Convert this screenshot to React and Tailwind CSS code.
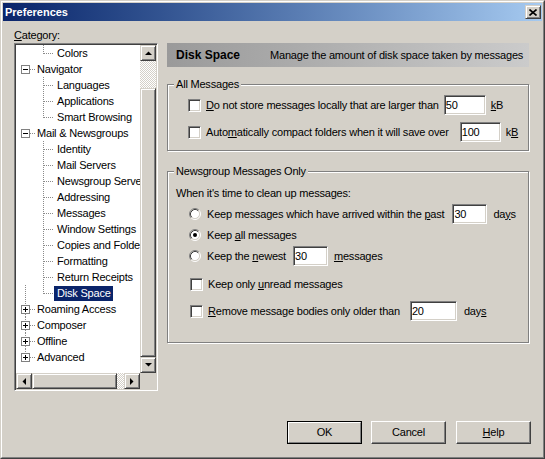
import React from "react";

const sunken =
  "border border-t-[#808080] border-l-[#808080] border-r-white border-b-white shadow-[inset_1px_1px_0_#404040,inset_-1px_-1px_0_#d4d0c8]";
const raised =
  "border border-t-[#d4d0c8] border-l-[#d4d0c8] border-r-[#404040] border-b-[#404040] shadow-[inset_1px_1px_0_#fff,inset_-1px_-1px_0_#808080]";
const checker =
  "bg-[image:repeating-conic-gradient(#d4d0c8_0_25%,#ffffff_0_50%)] bg-[length:2px_2px]";

const tree = [
  { label: "Colors", level: 1, v: "half" },
  { label: "Navigator", level: 0, box: "-" },
  { label: "Languages", level: 1, v: "full" },
  { label: "Applications", level: 1, v: "full" },
  { label: "Smart Browsing", level: 1, v: "half" },
  { label: "Mail & Newsgroups", level: 0, box: "-" },
  { label: "Identity", level: 1, v: "full" },
  { label: "Mail Servers", level: 1, v: "full" },
  { label: "Newsgroup Servers", level: 1, v: "full" },
  { label: "Addressing", level: 1, v: "full" },
  { label: "Messages", level: 1, v: "full" },
  { label: "Window Settings", level: 1, v: "full" },
  { label: "Copies and Folders", level: 1, v: "full" },
  { label: "Formatting", level: 1, v: "full" },
  { label: "Return Receipts", level: 1, v: "full" },
  { label: "Disk Space", level: 1, v: "half", selected: true, conn: true },
  { label: "Roaming Access", level: 0, box: "+", up: true, down: true },
  { label: "Composer", level: 0, box: "+", up: true, down: true },
  { label: "Offline", level: 0, box: "+", up: true, down: true },
  { label: "Advanced", level: 0, box: "+", up: true },
];

const dots = { stroke: "#8a8a8a", strokeWidth: 1, strokeDasharray: "1 1" };

function TreeRow({ item }) {
  if (item.level === 0) {
    return (
      <div className="flex h-[16px] items-center whitespace-nowrap">
        <svg width="19" height="16" className="shrink-0">
          {item.up && <line x1="9.5" y1="0" x2="9.5" y2="4" {...dots} />}
          {item.down && <line x1="9.5" y1="13" x2="9.5" y2="16" {...dots} />}
          <line x1="14" y1="8.5" x2="19" y2="8.5" {...dots} />
          <rect x="5.5" y="4.5" width="8" height="8" fill="#fff" stroke="#808080" />
          <line x1="7" y1="8.5" x2="12" y2="8.5" stroke="#000" />
          {item.box === "+" && <line x1="9.5" y1="6" x2="9.5" y2="11" stroke="#000" />}
        </svg>
        <span className="pl-[2px]">{item.label}</span>
      </div>
    );
  }
  return (
    <div className="flex h-[16px] items-center whitespace-nowrap">
      <svg width="38" height="16" className="shrink-0">
        {item.conn && <line x1="9.5" y1="0" x2="9.5" y2="16" {...dots} />}
        <line x1="27.5" y1="0" x2="27.5" y2={item.v === "full" ? 16 : 9} {...dots} />
        <line x1="28" y1="8.5" x2="37" y2="8.5" {...dots} />
      </svg>
      {item.selected ? (
        <span className="h-[15px] bg-[#0a246a] pl-[3px] pr-[2px] text-white leading-[15px]">
          {item.label}
        </span>
      ) : (
        <span className="pl-[3px]">{item.label}</span>
      )}
    </div>
  );
}

const Tri = ({ dir }) => {
  const pts = {
    up: "0,4 7,4 3.5,0.5",
    down: "0,0 7,0 3.5,3.5",
    left: "4,0 4,7 0.5,3.5",
    right: "0,0 0,7 3.5,3.5",
  }[dir];
  const v = dir === "up" || dir === "down";
  return (
    <svg width={v ? 7 : 4} height={v ? 4 : 7}>
      <polygon points={pts} fill="#000" />
    </svg>
  );
};

const ScrollBtn = ({ dir }) => (
  <div className={`flex h-[16px] w-[16px] shrink-0 items-center justify-center bg-[#d4d0c8] ${raised}`}>
    <Tri dir={dir} />
  </div>
);

const Check = () => <span className={`h-[13px] w-[13px] shrink-0 bg-white ${sunken}`} />;

const Radio = ({ checked }) => (
  <svg width="12" height="12" className="shrink-0">
    <circle cx="6" cy="6" r="4.5" fill="#fff" />
    <path d="M2.11 9.89 A5.5 5.5 0 0 1 9.89 2.11" fill="none" stroke="#808080" />
    <path d="M9.89 2.11 A5.5 5.5 0 0 1 2.11 9.89" fill="none" stroke="#fff" />
    <path d="M2.82 9.18 A4.5 4.5 0 0 1 9.18 2.82" fill="none" stroke="#404040" />
    <path d="M9.18 2.82 A4.5 4.5 0 0 1 2.82 9.18" fill="none" stroke="#d4d0c8" />
    {checked && <circle cx="6" cy="6" r="2" fill="#000" />}
  </svg>
);

const Field = ({ value, w }) => (
  <input
    type="text"
    defaultValue={value}
    readOnly
    className={`h-[20px] bg-white pl-[1px] outline-none ${sunken} ${w}`}
  />
);

const U = ({ children }) => <span className="underline underline-offset-[1px]">{children}</span>;

function DlgButton({ children, isDefault }) {
  if (isDefault) {
    return (
      <div className="h-[23px] w-[75px] border border-black">
        <div className="flex h-full items-center justify-center border border-t-white border-l-white border-r-[#808080] border-b-[#808080]">
          {children}
        </div>
      </div>
    );
  }
  return (
    <div className="flex h-[23px] w-[75px] items-center justify-center border border-t-white border-l-white border-r-[#404040] border-b-[#404040] shadow-[inset_-1px_-1px_0_#808080]">
      {children}
    </div>
  );
}

const legend = "ml-[6px] bg-[#d4d0c8] px-[2px] leading-[13px]";
const group =
  "border border-[#808080] shadow-[inset_1px_1px_0_#fff,1px_1px_0_#fff]";

export default function App() {
  return (
    <div className="h-[459px] w-[545px] border border-t-[#d4d0c8] border-l-[#d4d0c8] border-r-[#404040] border-b-[#404040] bg-[#d4d0c8] font-['Liberation_Sans',Arial,sans-serif] text-[11px] leading-[13px] tracking-[-0.2px] text-black">
      <div className="flex h-full flex-col border border-t-white border-l-white border-r-[#808080] border-b-[#808080] p-px">
        {/* title bar */}
        <div className="flex h-[18px] shrink-0 items-center justify-between bg-linear-to-r from-[#0a246a] to-[#a6caf0] pl-[2px] pr-[1px]">
          <span className="text-[11px] font-bold tracking-normal text-white">Preferences</span>
          <div className={`flex h-[14px] w-[16px] items-center justify-center bg-[#d4d0c8] ${raised}`}>
            <svg width="8" height="7">
              <path d="M0.5 0.5 L7.5 6.5 M7.5 0.5 L0.5 6.5" stroke="#000" strokeWidth="1.6" />
            </svg>
          </div>
        </div>

        <div className="flex flex-1 flex-col">
          <div className="flex items-start gap-[9px] pl-[11px] pr-[13px] pt-[7px]">
            {/* left column */}
            <div className="w-[144px] shrink-0">
              <div className="h-[14px] leading-[14px]">
                <U>C</U>ategory:
              </div>
              <div className={`mt-px flex h-[348px] flex-col bg-white ${sunken} p-px`}>
                <div className="flex h-[328px]">
                  <div className="w-[124px] overflow-hidden">
                    {tree.map((item) => (
                      <TreeRow key={item.label} item={item} />
                    ))}
                  </div>
                  <div className="flex w-[16px] flex-col">
                    <ScrollBtn dir="up" />
                    <div className={`h-[27px] ${checker}`} />
                    <div className={`h-[269px] bg-[#d4d0c8] ${raised}`} />
                    <ScrollBtn dir="down" />
                  </div>
                </div>
                <div className="flex h-[16px]">
                  <ScrollBtn dir="left" />
                  <div className={`w-[85px] bg-[#d4d0c8] ${raised}`} />
                  <div className={`w-[7px] ${checker}`} />
                  <ScrollBtn dir="right" />
                  <div className="w-[16px] bg-[#d4d0c8]" />
                </div>
              </div>
            </div>

            {/* right column */}
            <div className="mt-[15px] w-[362px] shrink-0">
              <div className="flex h-[24px] items-center bg-linear-to-r from-[#9a9a9a] to-[#cbcbcb] pl-[9px]">
                <span className="w-[94px] text-[12px] font-bold tracking-normal">Disk Space</span>
                <span>Manage the amount of disk space taken by messages</span>
              </div>

              <fieldset className={`mt-[11px] ${group}`}>
                <legend className={legend}>All Messages</legend>
                <div className="pb-[8px] pl-[20px]">
                  <div className="mt-[4px] flex h-[20px] items-center">
                    <Check />
                    <span className="ml-[5px]">
                      <U>D</U>o not store messages locally that are larger than
                    </span>
                    <div className="ml-[5px]">
                      <Field value="50" w="w-[42px]" />
                    </div>
                    <span className="ml-[5px]">
                      <U>k</U>B
                    </span>
                  </div>
                  <div className="mt-[7px] flex h-[20px] items-center">
                    <Check />
                    <span className="ml-[5px]">
                      Auto<U>m</U>atically compact folders when it will save over
                    </span>
                    <div className="ml-[11px]">
                      <Field value="100" w="w-[41px]" />
                    </div>
                    <span className="ml-[5px]">
                      k<U>B</U>
                    </span>
                  </div>
                </div>
              </fieldset>

              <fieldset className={`mt-[14px] ${group}`}>
                <legend className={legend}>Newsgroup Messages Only</legend>
                <div className="pb-[21px] pl-[8px]">
                  <div className="mt-[9px]">When it's time to clean up messages:</div>
                  <div className="mt-[4px] flex h-[20px] items-center pl-[13px]">
                    <Radio />
                    <span className="ml-[6px]">
                      Keep messages which have arrived within the <U>p</U>ast
                    </span>
                    <div className="ml-[8px]">
                      <Field value="30" w="w-[35px]" />
                    </div>
                    <span className="ml-[6px]">
                      da<U>y</U>s
                    </span>
                  </div>
                  <div className="mt-px flex h-[20px] items-center pl-[13px]">
                    <Radio checked />
                    <span className="ml-[6px]">
                      Keep <U>a</U>ll messages
                    </span>
                  </div>
                  <div className="mt-px flex h-[20px] items-center pl-[13px]">
                    <Radio />
                    <span className="ml-[6px]">
                      Keep the <U>n</U>ewest
                    </span>
                    <div className="ml-[7px]">
                      <Field value="30" w="w-[35px]" />
                    </div>
                    <span className="ml-[6px]">
                      <U>m</U>essages
                    </span>
                  </div>
                  <div className="mt-[8px] flex h-[20px] items-center pl-[14px]">
                    <Check />
                    <span className="ml-[5px]">
                      Keep only <U>u</U>nread messages
                    </span>
                  </div>
                  <div className="mt-[7px] flex h-[20px] items-center pl-[14px]">
                    <Check />
                    <span className="ml-[5px]">
                      <U>R</U>emove message bodies only older than
                    </span>
                    <div className="ml-[10px]">
                      <Field value="20" w="w-[47px]" />
                    </div>
                    <span className="ml-[7px]">
                      day<U>s</U>
                    </span>
                  </div>
                </div>
              </fieldset>
            </div>
          </div>

          <div className="mt-auto flex justify-end pb-[12px] pr-[11px]">
            <DlgButton isDefault>OK</DlgButton>
            <div className="ml-[9px]">
              <DlgButton>Cancel</DlgButton>
            </div>
            <div className="ml-[10px]">
              <DlgButton>
                <span>
                  <U>H</U>elp
                </span>
              </DlgButton>
            </div>
          </div>
        </div>
      </div>
    </div>
  );
}
